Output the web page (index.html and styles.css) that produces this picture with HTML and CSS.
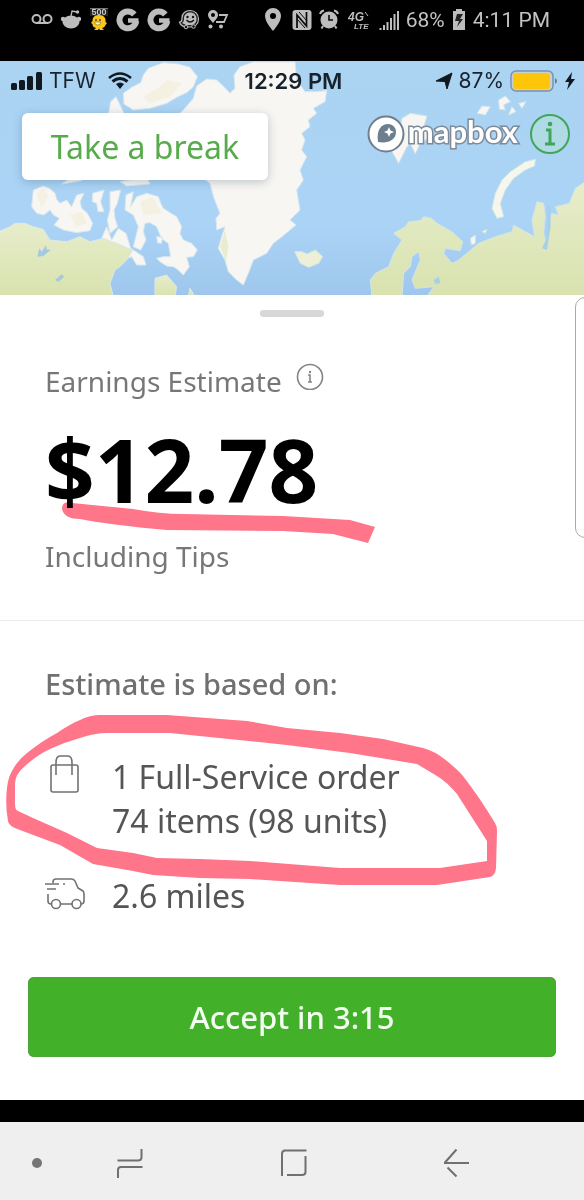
FILE: index.html
```html
<!DOCTYPE html>
<html lang="en">
<head>
<meta charset="utf-8">
<meta name="viewport" content="width=device-width, initial-scale=1">
<title>Earnings Estimate</title>
<link rel="stylesheet" href="styles.css">
</head>
<body>
<header class="device-bar">
  <div class="notices">
    <svg width="22" height="24" viewBox="0 0 22 24" fill="none" stroke="#bdbdbd" stroke-width="2"><circle cx="5.500" cy="11" r="4"/><circle cx="16.500" cy="11" r="4"/><path d="M5 15H17"/></svg>
    <svg width="22" height="24" viewBox="0 0 22 24"><ellipse cx="11" cy="14" rx="8.500" ry="6.500" fill="#bdbdbd"/><circle cx="3" cy="11" r="2.200" fill="#bdbdbd"/><circle cx="19" cy="11" r="2.200" fill="#bdbdbd"/><path d="M11 8L12 3L17 4" fill="none" stroke="#bdbdbd" stroke-width="1.300"/><circle cx="17.500" cy="4" r="1.700" fill="#bdbdbd"/></svg>
    <svg width="20" height="24" viewBox="0 0 20 24"><path d="M1 .5H19V8H1Z" fill="#222"/><path d="M1 .5H19" stroke="#777"/><path d="M10 7C15 7 17 10 16.500 14L18 15L16.500 17C16 19 14 20 13 20L15 22H11L10 20.500L9 22H5L7 20C4 19 3.500 18 3.500 16L2 15L3.500 13C3.500 9 6 7 10 7Z" fill="#fbc51b"/><circle cx="7" cy="12" r="1" fill="#654800"/><circle cx="11" cy="12" r="1" fill="#654800"/><path d="M5.500 14H12Q11 18 8.500 17Q6 17 5.500 14" fill="#fff5ba" stroke="#8d6500" stroke-width=".6"/><text x="10" y="7" class="tiny-count">500</text></svg>
    <svg width="24" height="24" viewBox="0 0 24 24" fill="none" stroke="#bdbdbd" stroke-width="6"><path d="M18.300 6.500A8.400 8.400 0 1 0 20.200 13" /><path d="M12 12.500H22.500" stroke-width="4.500"/></svg>
    <svg width="24" height="24" viewBox="0 0 24 24" fill="none" stroke="#bdbdbd" stroke-width="6"><path d="M18.300 6.500A8.400 8.400 0 1 0 20.200 13" /><path d="M12 12.500H22.500" stroke-width="4.500"/></svg>
    <svg width="22" height="24" viewBox="0 0 22 24"><path d="M12 2.500C17 2.500 20.500 6 20.500 11C20.500 16 17 19 12 19H7C4 18 2 16 1.500 14C4 14 4 12 4 10C4 5.500 7.500 2.500 12 2.500Z" fill="#222" stroke="#bdbdbd" stroke-width="1.200"/><path d="M12 4.500C16 4.500 18.500 7 18.500 11S16 17 12 17H8C6 16 5 15.500 4 15C6 14 6 12 6 10C6 7 8.500 4.500 12 4.500Z" fill="#bdbdbd"/><circle cx="9.500" cy="9" r="1.200" fill="#111"/><circle cx="15" cy="9" r="1.200" fill="#111"/><path d="M8.500 12Q12 16 16 12" fill="none" stroke="#111" stroke-width="1.300"/><circle cx="8" cy="19" r="1.800" fill="#111" stroke="#bdbdbd"/><circle cx="15.500" cy="18.500" r="1.800" fill="#111" stroke="#bdbdbd"/></svg>
    <svg width="22" height="24" viewBox="0 0 22 24" fill="#bdbdbd"><path fill-rule="evenodd" d="M6 2A5 5 0 0 1 11 7C11 10 8 12 6 15C4 12 1 10 1 7A5 5 0 0 1 6 2ZM6 5A2 2 0 1 0 6 9A2 2 0 1 0 6 5Z"/><circle cx="3.500" cy="18.500" r="2"/><circle cx="14" cy="18.500" r="2"/><path d="M12 7H20L17 14H9" fill="none" stroke="#bdbdbd" stroke-width="1.800"/></svg>
  </div>
  <div class="system">
    <svg width="18" height="24" viewBox="0 0 18 24"><path fill="#bdbdbd" fill-rule="evenodd" d="M9 0A8 8 0 0 1 17 8C17 14 9 23 9 23S1 14 1 8A8 8 0 0 1 9 0ZM9 5A3 3 0 1 0 9 11A3 3 0 1 0 9 5Z"/></svg>
    <svg class="nfc" width="20" height="22" viewBox="0 0 20 22"><rect x=".5" y="1" width="19" height="20" rx="3" fill="#bdbdbd"/><path d="M5 19V6L14.500 17V3" fill="none" stroke="#080808" stroke-width="1.700"/><path d="M7 3L15 12M5 10L13 19" stroke="#080808" stroke-width="1"/></svg>
    <svg width="20" height="24" viewBox="0 0 20 24"><circle cx="10" cy="12" r="8.500" fill="#bdbdbd"/><path d="M1 6Q2 3 5 2.500M15 2.500Q18 3 19 6M4 18L2.500 20.500M16 18L17.500 20.500" fill="none" stroke="#bdbdbd" stroke-width="2"/><path d="M10 7V12H14" fill="none" stroke="#080808" stroke-width="1.600"/></svg>
    <svg class="lte" width="22" height="24" viewBox="0 0 22 24" fill="#bdbdbd"><text x="0" y="13" class="net-large">4G</text><text x="6" y="21" class="net-small">LTE</text><path d="M17 4L20 8" stroke="#bdbdbd"/></svg>
    <svg class="cell" width="20" height="22" viewBox="0 0 20 22" stroke="#bdbdbd" stroke-width="2"><path d="M1.500 21V19M5 21V16M8.500 21V13M12 21V9M15.500 21V5M19 21V2"/></svg>
    <span class="device-text">68%</span>
    <svg width="14" height="22" viewBox="0 0 14 22"><path d="M4 2V0H10V2H13V21H1V2Z" fill="#bdbdbd"/><path d="M5 5H11L8 10H11L5 18L7 12H3Z" fill="#222"/></svg>
    <time class="device-text">4:11 PM</time>
  </div>
</header>

<section class="map" aria-label="Map">
  <svg class="map-art" viewBox="0 61 584 234" preserveAspectRatio="xMidYMid slice" aria-hidden="true">
    <defs>
      <linearGradient id="sea" x1="0" y1="0" x2="0" y2="1"><stop offset="0" stop-color="#abd3f2"/><stop offset=".7" stop-color="#aad3f6"/><stop offset="1" stop-color="#9fc7ed"/></linearGradient>
      <linearGradient id="green" x1="0" y1="0" x2="0" y2="1"><stop offset="0" stop-color="#e7edcb"/><stop offset="1" stop-color="#d8e2ae"/></linearGradient>
    </defs>
    <rect y="61" width="584" height="234" fill="url(#sea)"/>
    <g transform="translate(0 60) scale(.333333)" stroke="#d9e7ee" stroke-width="3" stroke-linejoin="round">
      <g fill="#f7f6f3">
        <path d="M370 100L395 82 422 68 430 45 445 25 490 8 535 12 570 22 592 50 580 80 560 98 530 112 500 130 450 145 400 150 372 132Z"/>
        <path d="M325 165L332 125 348 110 365 145 375 168Z"/>
        <path d="M520 180L550 150 580 115 590 78 620 57 650 60 672 80 690 100 705 85 702 45 720 20 760 6 885 6 890 60 915 95 945 95 980 92 975 125 940 145 950 160 925 180 930 200 905 220 915 240 905 270 920 290 900 330 910 360 890 390 900 450 870 480 888 495 840 535 820 550 800 580 760 600 745 640 730 675 710 660 685 635 675 600 655 565 665 530 675 500 650 510 648 475 660 460 642 415 630 370 590 340 560 310Z"/>
        <path d="M100 390L130 378 150 386 165 400 170 418 180 430 200 420 215 440 230 405 252 400 240 425 245 445 262 460 278 490 270 512 230 518 190 510 162 495 178 475 160 465 150 450 132 465 110 460 95 440Z"/>
        <path d="M278 400L312 390 302 425 312 455 294 455 290 430 277 425Z"/>
        <path d="M330 395L362 390 352 430 342 450 345 475 353 500 330 520 322 480 330 450Z"/>
        <path d="M185 372L235 340 245 362 210 368ZM360 365L440 350 450 372 380 378Z"/>
        <path d="M378 405L400 395 392 440 410 410 440 400 475 410 482 430 490 445 510 458 530 470 545 500 540 520 550 540 575 550 592 570 580 590 560 592 568 620 550 645 535 630 520 620 500 618 480 605 470 595 490 590 512 590 505 550 490 540 480 525 470 500 450 488 435 490 430 515 438 540 422 570 400 560 415 500 400 465 375 450Z"/>
        <path d="M305 535L320 500 335 540 355 505 378 520 392 565 430 590 438 615 410 615 395 590 370 600 320 570Z"/>
        <path d="M470 530L488 532 484 550 472 548Z"/>
      </g>
      <g fill="url(#green)">
        <path d="M-5 515L30 500 45 490 75 490 100 500 130 508 150 540 200 545 240 530 270 545 310 535 350 550 398 570 380 600 360 620 345 630 330 670 340 710H-5Z"/>
        <path d="M465 655L500 645 530 680 525 710H465ZM565 710L570 685 585 710Z"/>
      </g>
      <path d="M660 560L675 510 685 560 678 605Z" fill="#e9edcf" stroke="none"/>
      <path d="M112 590L118 565 125 575 138 555 140 568 152 570 130 588ZM165 660L185 643 193 650 175 666Z" fill="#a4c9e3" stroke="none"/>
      <path d="M110 400L130 385 145 410 125 445ZM210 465L245 455 260 490 230 500ZM420 425L460 410 485 460 430 465ZM430 110L480 80 500 60 545 70 510 110 450 130Z" fill="#f4f1e3" stroke="none"/>
    </g>
    <g transform="translate(292 60) scale(.333333)" stroke="#d2e5e5" stroke-width="3" stroke-linejoin="round">
      <path fill="url(#green)" d="M240 710L235 660 250 640 290 620 305 580 330 540 305 520 340 500 350 485 385 482 395 470 418 475 435 490 480 515 512 545 505 572 460 565 455 580 480 610 500 600 530 575 560 550 610 530 660 515 665 495 700 515 728 530 720 480 735 425 755 430 760 470 755 520 762 550 770 510 778 460 800 465 790 440 832 430 850 385 880 365V710H405L425 680 370 685 360 660 385 600 380 575 360 590 355 620 335 640 330 710Z"/>
      <path fill="#a6cfea" stroke="none" d="M767 435L775 440 776 500 765 570 750 565 764 535ZM425 660L440 650 445 670 430 672Z"/>
      <path fill="#f5f7ed" d="M600 445L610 400 630 360 655 335 700 305 730 298 728 318 700 330 665 355 640 390 625 430 635 470 615 475Z"/>
      <path fill="#edf0d7" d="M8 575L30 575 45 582 70 570 92 590 80 610 50 622 25 610Z"/>
      <path fill="#f7f6f4" d="M330 175L355 160 405 168 395 200 415 230 385 250 370 282 355 250 345 260 320 310 300 275 315 250ZM555 160L570 138 595 140 580 165ZM620 120L640 108 655 125 635 135 640 150 622 148ZM660 140L672 155 650 165ZM680 130L702 125 690 145ZM535 535L550 525 550 550 538 555ZM570 515L585 508 580 520Z"/>
    </g>
  </svg>

  <div class="phone-bar">
    <div class="carrier">
      <svg width="32" height="20" viewBox="0 0 32 20" fill="#101820"><rect x="0" y="12" width="6" height="7" rx="1.500"/><rect x="8" y="9" width="6" height="10" rx="1.500"/><rect x="16" y="5" width="6" height="14" rx="1.500"/><rect x="25" y="1" width="6" height="18" rx="1.500"/></svg>
      <span>TFW</span>
      <svg class="wifi" width="24" height="18" viewBox="0 0 24 18" fill="none" stroke="#101820"><path d="M1 6Q12-3 23 6" stroke-width="2.500"/><path d="M4.500 9.500Q12 3.500 19.500 9.500" stroke-width="3"/><path d="M8 12Q12 9 16 12L12 17Z" fill="#101820" stroke="none"/></svg>
    </div>
    <time class="phone-time">12:29 PM</time>
    <div class="power">
      <svg width="18" height="18" viewBox="0 0 18 18"><path d="M1 9L17 1L12 17L10 9.500Z" fill="#101820" stroke="#101820" stroke-linejoin="round"/></svg>
      <span>87%</span>
      <svg width="48" height="22" viewBox="0 0 48 22"><rect x="1" y="1" width="42" height="20" rx="5" fill="#c7d2c8" stroke="#7a91b4" stroke-width="1.500"/><rect x="3" y="3" width="37" height="16" rx="3" fill="#fdc60b"/><path d="M45 8Q49 11 45 14Z" fill="#66788c"/></svg>
      <svg width="12" height="18" viewBox="0 0 12 18"><path d="M8 0L1 10H5L3 18L11 7H7Z" fill="#101820"/></svg>
    </div>
  </div>
  <div class="map-tools">
    <button class="break-button" type="button">Take a break</button>
    <div class="credits">
      <a class="mapbox" href="#mapbox">
        <svg width="38" height="38" viewBox="0 0 38 38"><circle cx="19" cy="19" r="17.500" fill="#fff" stroke="#727e8c" stroke-width="2"/><path d="M11 27C9 14 15 9 21 9C26 9 29 13 29 17C29 24 22 29 11 27Z" fill="#6d7f8e"/><path d="M22 12L23.500 15.500L27 17L23.500 18.500L22 22L20.500 18.500L17 17L20.500 15.500Z" fill="#fff"/></svg>
        <span>mapbox</span>
      </a>
      <button class="info-button" type="button" aria-label="Map information"><svg width="42" height="42" viewBox="0 0 42 42" fill="none" stroke="#3fa65a"><circle cx="21" cy="21" r="19" stroke-width="2" fill="#b4e0d8" fill-opacity=".6"/><path d="M17 17H21V30M16 31H26" stroke-width="3"/><circle cx="21" cy="11" r="2.300" fill="#3fa65a" stroke="none"/></svg></button>
    </div>
  </div>
</section>

<main class="sheet">
  <div class="handle"></div>
  <section class="earnings">
    <div class="label-row"><h1 class="label">Earnings Estimate</h1><svg width="28" height="28" viewBox="0 0 28 28" fill="none" stroke="#858585"><circle cx="14" cy="15" r="12.500" stroke-width="1.600"/><path d="M12 13H14V20M12 20H16" stroke-width="1.600"/><circle cx="14" cy="10" r="1.200" fill="#858585" stroke="none"/></svg></div>
    <p class="amount">$12.78</p>
    <p class="label">Including Tips</p>
  </section>
  <section class="basis">
    <h2 class="basis-title">Estimate is based on:</h2>
    <ul class="facts">
      <li><svg width="40" height="44" viewBox="0 0 40 44" fill="none" stroke="#727272" stroke-width="1.600" stroke-linejoin="round"><path d="M8 10H31Q33 10 33 12V35Q33 37 31 37H8Q6 37 6 35V12Q6 10 8 10Z"/><path d="M11 20V8Q11 1 15 1H23Q27 1 27 8V20"/></svg><span>1 Full-Service order<br>74 items (98 units)</span></li>
      <li><svg width="40" height="44" viewBox="0 0 40 44" fill="none" stroke="#727272" stroke-width="1.600" stroke-linejoin="round"><path d="M8 9V8Q8 5 11 5H26Q29 5 30 7L33 14L38 17Q39 18 39 20V27Q39 30 36 30M27 30H16M6 30Q3 30 3 27V20M0 10H14M18 10H20M2 15H11"/><circle cx="11" cy="30" r="4.500"/><circle cx="31.500" cy="30" r="4.500"/></svg><span>2.6 miles</span></li>
    </ul>
  </section>
  <button class="accept" type="button">Accept in 3:15</button>
  <svg class="marker" width="584" height="806" viewBox="0 294 584 806" aria-hidden="true">
    <path d="M62 508Q62 499 72 502L133 508Q160 513 183 513L283 515L350 519L375 526L368 542L333 533L283 530L167 529Q110 524 80 518Q64 518 62 508Z"/>
    <path fill-rule="evenodd" d="M100 714H167L247 720L287 727L340 732L383 738L423 747Q435 750 447 760T463 775Q480 797 495 822Q497 825 497 830L496 867Q495 875 490 876L437 884H340L250 878L200 877L153 874L133 870L93 863L60 844L20 829Q8 825 8 820Q5 803 7 787Q8 777 12 770Q17 760 27 752Q42 740 57 732Q70 723 80 719Q90 714 100 714ZM107 732Q95 732 80 737Q65 741 50 748Q37 754 25 765Q15 773 15 783V803Q15 809 18 810L33 817L67 832L97 847L133 852L157 857L200 858L250 860L340 867H440L487 860V840L457 793Q447 781 437 775T417 763L350 752L287 744L170 732Z"/>
  </svg>
  <div class="edge-panel"></div>
</main>
<nav class="device-nav" aria-label="Device navigation">
  <button class="dot" type="button" aria-label="Hide bar"></button>
  <div class="nav-keys">
    <button type="button" aria-label="Recents"><svg width="28" height="30" viewBox="0 0 28 30"><path d="M1.500 12.500H22Q25.500 12.500 25.500 9V1M26.500 19H5Q2 19 2 22V30"/></svg></button>
    <button type="button" aria-label="Home"><svg width="28" height="30" viewBox="0 0 28 30"><path d="M2 28V6Q2 2.500 5 2.500H26.500M25.500 8V24Q25.500 27 22 27H7"/></svg></button>
    <button type="button" aria-label="Back"><svg width="28" height="30" viewBox="0 0 28 30"><path d="M13.500 1.500L2 14.500V15H26M4.500 19.500L13.500 28.500"/></svg></button>
  </div>
</nav>
</body>
</html>
```
FILE: styles.css
```css
* { box-sizing: border-box; }
body {
  margin: 0;
  min-height: 100vh;
  display: flex;
  flex-direction: column;
  background: #fff;
  font-family: "Noto Sans", "Open Sans", sans-serif;
}
h1, h2, p, ul { margin: 0; padding: 0; }
svg { display: block; flex: none; }
button { padding: 0; border: 0; background: none; font: inherit; cursor: pointer; }

.device-bar {
  height: 61px;
  padding: 8px 34px 29px 31px;
  display: flex;
  align-items: center;
  justify-content: space-between;
  background: #000;
}
.notices { display: flex; align-items: center; gap: 7px; }
.system { display: flex; align-items: center; gap: 7px; }
.nfc { margin-left: 3px; }
.lte, .cell { margin-left: 2px; }
.device-text { font: 21px/24px Roboto, sans-serif; color: #c2c2c2; white-space: nowrap; }
.tiny-count { font: bold 9px "Liberation Sans", sans-serif; fill: #c8c8c8; text-anchor: middle; }
.net-large { font: italic bold 12px "Liberation Sans", sans-serif; }
.net-small { font: italic bold 8px "Liberation Sans", sans-serif; }

.map { position: relative; height: 234px; overflow: hidden; }
.map-art { position: absolute; inset: 0; width: 100%; height: 100%; }
.phone-bar {
  position: relative;
  height: 40px;
  padding: 0 8px 0 11px;
  display: grid;
  grid-template-columns: 1fr auto 1fr;
  align-items: center;
  font: 21px/24px Inter, sans-serif;
  color: #18222c;
}
.carrier, .power { display: flex; align-items: center; gap: 6px; }
.power { justify-content: flex-end; }
.wifi { margin-left: 6px; }
.phone-time { font-size: 22px; font-weight: 600; }
.map-tools {
  position: relative;
  display: flex;
  justify-content: space-between;
  align-items: flex-start;
  padding: 12px 13px 0 22px;
}
.break-button {
  width: 246px;
  height: 67px;
  border-radius: 6px;
  background: #fff;
  box-shadow: 0 2px 10px rgba(60, 80, 110, .3);
  color: #58ab4c;
  font-size: 32px;
  line-height: 44px;
}
.credits { display: flex; align-items: center; gap: 11px; }
.mapbox { display: flex; align-items: flex-start; gap: 3px; color: #fff; text-decoration: none; }
.mapbox span {
  font: bold 31px/32px Lato, sans-serif;
  -webkit-text-stroke: 3px #7c8a99;
  paint-order: stroke fill;
}

.sheet {
  position: relative;
  flex: 1;
  display: flex;
  flex-direction: column;
  overflow: hidden;
  background: #fff;
}
.handle {
  width: 64px;
  height: 7px;
  margin: 15px auto 0;
  border-radius: 3px;
  background: #d8d8d8;
}
.earnings { padding: 45px; border-bottom: 1px solid #ebebeb; }
.label-row { display: flex; align-items: flex-start; gap: 14px; }
.label { font-size: 28px; line-height: 38px; font-weight: 400; color: #777; }
.amount { margin: 19px 0 18px; font-size: 87px; line-height: 100px; font-weight: 700; color: #000; }
.basis { padding: 43px 45px 59px; }
.basis-title { font-size: 29px; line-height: 40px; font-weight: 500; color: #707070; }
.facts { margin-top: 51px; display: grid; gap: 31px; list-style: none; }
.facts li { display: flex; align-items: flex-start; gap: 27px; font-size: 32px; line-height: 44px; color: #555; }
.accept {
  height: 80px;
  margin: 0 28px 43px;
  border-radius: 6px;
  background: #43b02a;
  box-shadow: inset 0 0 0 1px #4ca438;
  color: #f2fff0;
  font-size: 31px;
  font-weight: 500;
}
.marker { position: absolute; top: 0; left: 0; pointer-events: none; mix-blend-mode: multiply; fill: #ff7589; }
.edge-panel {
  position: absolute;
  top: 2px;
  right: -12px;
  width: 21px;
  height: 241px;
  border: 1px solid #aaa;
  border-radius: 10px;
}
.device-nav {
  height: 100px;
  padding: 4px 113px 0 32px;
  display: flex;
  align-items: center;
  gap: 74px;
  border-top: 22px solid #000;
  background: #efefef;
}
.nav-keys { flex: 1; display: flex; justify-content: space-between; }
.device-nav path { fill: none; stroke: #707070; stroke-width: 2; }
.dot { width: 10px; height: 10px; border-radius: 50%; background: #757575; }
```
